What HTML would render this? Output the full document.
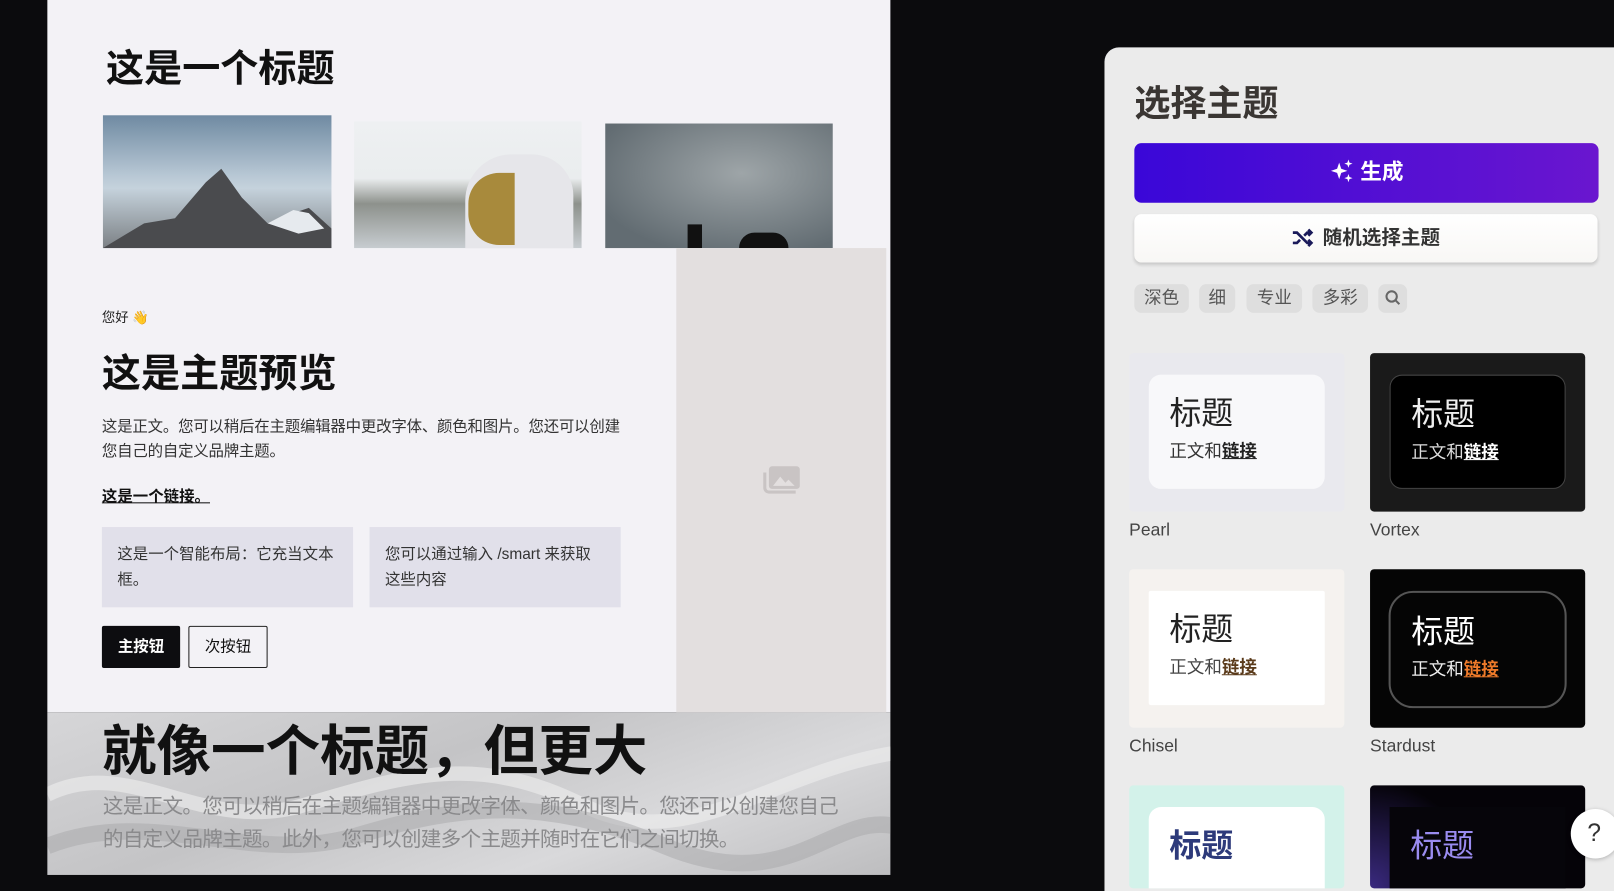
<!DOCTYPE html>
<html><head><meta charset="utf-8"><style>
*{margin:0;padding:0;box-sizing:border-box}
html,body{width:1614px;height:875px;overflow:hidden;background:#0b0b0d}
#s{position:absolute;left:0;top:0;width:1568px;height:850px;transform:scale(1.02934);transform-origin:0 0;font-family:"Liberation Sans","Noto Sans CJK SC",sans-serif}
.a{position:absolute}
.t{white-space:nowrap}
.card{position:absolute;width:209px;height:154px;border-radius:4px;overflow:hidden}
.in{position:absolute;left:19px;top:21px;width:171px;height:111px;border-radius:12px}
.h{position:absolute;left:20px;top:18px;font-size:31px;line-height:40px}
.b{position:absolute;left:20px;top:64px;font-size:17px;line-height:22px}
.b u{font-weight:bold}
.lbl{position:absolute;font-size:17px;color:#444}
.chip{position:absolute;top:276px;height:28px;background:#dedede;border-radius:7px;font-size:17px;color:#555;text-align:center;line-height:28px}
</style></head><body><div id="s">
<div class="a" style="left:46px;top:0;width:819px;height:692px;background:#f3f2f6"></div>
<div class="a t" style="left:103px;top:36px;font-size:37px;font-weight:bold;color:#111">这是一个标题</div>
<div class="a" style="left:100px;top:112px;width:222px;height:129px;background:linear-gradient(180deg,#6f8aa2 0%,#b7c7d4 45%,#c5d2dc 55%,#7c8185 100%)"></div>
<svg class="a" style="left:100px;top:112px" width="222" height="129"><polygon points="0,129 40,105 70,100 100,65 115,52 135,80 160,105 185,95 200,90 222,110 222,129" fill="#4a4b4e"/><polygon points="160,105 185,92 200,95 215,110 190,115" fill="#e6eaee"/></svg>
<div class="a" style="left:344px;top:118px;width:221px;height:123px;background:linear-gradient(180deg,#eef0f2 0%,#eaedee 45%,#8d918c 65%,#c7ccd0 100%)"></div>
<div class="a" style="left:452px;top:150px;width:105px;height:91px;background:#e6e6ea;border-radius:45px 40px 0 0"></div>
<div class="a" style="left:455px;top:168px;width:45px;height:70px;background:#a88a3c;border-radius:30px 0 0 30px"></div>
<div class="a" style="left:588px;top:120px;width:221px;height:121px;background:radial-gradient(ellipse at 60% 40%,#9ea5a8,#626c72 80%)"></div>
<div class="a" style="left:668px;top:218px;width:14px;height:23px;background:#111"></div>
<div class="a" style="left:718px;top:226px;width:48px;height:15px;background:#111;border-radius:20px 20px 0 0"></div>
<div class="a" style="left:657px;top:241px;width:204px;height:451px;background:#e3dfdf"></div>
<svg class="a" style="left:741px;top:451px" width="38" height="30"><rect x="6" y="2" width="30" height="22" rx="3" fill="#c9c4c4"/><path d="M2 8v15a4 4 0 0 0 4 4h26" stroke="#c9c4c4" stroke-width="3" fill="none"/><path d="M10 21l7-9 5 6 3-3 6 6z" fill="#e3dfdf"/></svg>
<div class="a t" style="left:99px;top:298px;font-size:13px;color:#222">您好 <span style="color:#f3b23a">👋</span></div>
<div class="a t" style="left:99px;top:332px;font-size:38px;font-weight:bold;color:#111">这是主题预览</div>
<div class="a" style="left:99px;top:403px;width:506px;font-size:15px;line-height:24px;color:#333;letter-spacing:-0.2px">这是正文。您可以稍后在主题编辑器中更改字体、颜色和图片。您还可以创建您自己的自定义品牌主题。</div>
<div class="a t" style="left:99px;top:471px;font-size:15px;font-weight:bold;color:#111;text-decoration:underline">这是一个链接。</div>
<div class="a" style="left:99px;top:512px;width:244px;height:78px;background:#e1e0ea;padding:14px 15px;font-size:15px;line-height:25px;color:#333">这是一个智能布局：它充当文本框。</div>
<div class="a" style="left:359px;top:512px;width:244px;height:78px;background:#e1e0ea;padding:14px 15px;font-size:15px;line-height:25px;color:#333">您可以通过输入 /smart 来获取这些内容</div>
<div class="a" style="left:99px;top:608px;width:76px;height:41px;background:#0d0d10;border-radius:2px;color:#fff;font-size:15px;font-weight:bold;text-align:center;line-height:41px">主按钮</div>
<div class="a" style="left:183px;top:608px;width:77px;height:41px;border:1px solid #222;border-radius:2px;color:#111;font-size:15px;text-align:center;line-height:39px">次按钮</div>
<div class="a" style="left:46px;top:692px;width:819px;height:158px;background:linear-gradient(160deg,#d6d6d8 0%,#c4c4c6 40%,#d9d9db 70%,#bdbdbf 100%);overflow:hidden">
<svg width="820" height="158"><path d="M0 80 C80 40 150 120 250 90 S420 40 520 90 700 60 820 40" stroke="#eee" stroke-width="14" fill="none" opacity=".6"/><path d="M0 130 C100 90 200 150 300 120 S480 80 600 130 760 100 820 110" stroke="#a8a8aa" stroke-width="16" fill="none" opacity=".5"/></svg></div>
<div class="a t" style="left:99px;top:688px;font-size:53px;font-weight:bold;color:#111">就像一个标题，但更大</div>
<div class="a" style="left:100px;top:768px;width:730px;font-size:20px;line-height:32px;color:#8a8a8c;letter-spacing:-0.7px">这是正文。您可以稍后在主题编辑器中更改字体、颜色和图片。您还可以创建您自己的自定义品牌主题。此外，您可以创建多个主题并随时在它们之间切换。</div>

<div class="a" style="left:1073px;top:46px;width:520px;height:820px;background:#ebebeb;border-radius:14px 0 0 0"></div>
<div class="a t" style="left:1102px;top:72px;font-size:35px;font-weight:bold;color:#3a3633">选择主题</div>
<div class="a" style="left:1102px;top:139px;width:451px;height:58px;border-radius:7px;background:linear-gradient(90deg,#3a07d8,#6a16cf);color:#fff;font-size:21px;font-weight:bold;text-align:center;line-height:58px">
<svg width="24" height="24" viewBox="0 0 24 24" style="vertical-align:-4px;margin-right:6px"><path d="M9 4l2 6 6 2-6 2-2 6-2-6-6-2 6-2z" fill="#fff"/><path d="M18 1l1 3 3 1-3 1-1 3-1-3-3-1 3-1zM18 15l1 3 3 1-3 1-1 3-1-3-3-1 3-1z" fill="#fff"/></svg>生成</div>
<div class="a" style="left:1102px;top:208px;width:450px;height:47px;border-radius:7px;background:linear-gradient(#fff,#f8f7f5);box-shadow:0 2px 3px rgba(0,0,0,.15);color:#333;font-size:19px;font-weight:bold;text-align:center;line-height:47px">
<svg width="22" height="18" viewBox="0 0 22 18" style="vertical-align:-3px;margin-right:8px"><path d="M1 4h4l10 10h4M1 14h4l3-3M12 7l3-3h4M16 1l3 3-3 3M16 11l3 3-3 3" stroke="#1a1a5a" stroke-width="2.6" fill="none"/></svg>随机选择主题</div>
<div class="chip" style="left:1102px;width:53px">深色</div>
<div class="chip" style="left:1165px;width:35px">细</div>
<div class="chip" style="left:1211px;width:54px">专业</div>
<div class="chip" style="left:1275px;width:54px">多彩</div>
<div class="chip" style="left:1339px;width:28px"><svg width="16" height="16" viewBox="0 0 16 16" style="vertical-align:-2px"><circle cx="7" cy="7" r="5" stroke="#666" stroke-width="2" fill="none"/><path d="M11 11l3.5 3.5" stroke="#666" stroke-width="2"/></svg></div>

<div class="card" style="left:1097px;top:343px;background:#e9e9ee"><div class="in" style="background:#f8f8fa"><div class="h" style="color:#222">标题</div><div class="b" style="color:#333">正文和<u style="color:#222">链接</u></div></div></div>
<div class="lbl" style="left:1097px;top:505px">Pearl</div>
<div class="card" style="left:1331px;top:343px;background:#1a1a1a"><div class="in" style="background:#000;border:1px solid #444"><div class="h" style="color:#eee">标题</div><div class="b" style="color:#ddd">正文和<u style="color:#fff">链接</u></div></div></div>
<div class="lbl" style="left:1331px;top:505px">Vortex</div>
<div class="card" style="left:1097px;top:553px;background:#f5f2ef"><div class="in" style="background:#fff;border-radius:2px"><div class="h" style="color:#222">标题</div><div class="b" style="color:#444">正文和<u style="color:#5a3a1a">链接</u></div></div></div>
<div class="lbl" style="left:1097px;top:715px">Chisel</div>
<div class="card" style="left:1331px;top:553px;background:#050505"><div class="in" style="left:18px;width:173px;height:114px;background:transparent;border:2px solid #555;border-radius:24px"><div class="h" style="color:#fff">标题</div><div class="b" style="color:#eee">正文和<u style="color:#f07b2a">链接</u></div></div></div>
<div class="lbl" style="left:1331px;top:715px">Stardust</div>
<div class="card" style="left:1097px;top:763px;height:100px;background:#d3f2ea"><div class="in" style="background:#fff"><div class="h" style="color:#2d3a7a;font-weight:bold">标题</div></div></div>
<div class="card" style="left:1331px;top:763px;height:100px;background:radial-gradient(circle at 0% 100%,#3a2a80,#050308 45%)"><div class="in" style="background:#06050a;border-radius:0"><div class="h" style="color:#9a8cf0">标题</div></div></div>
<div class="a" style="left:1526px;top:786px;width:48px;height:48px;border-radius:50%;background:#fff;box-shadow:0 1px 4px rgba(0,0,0,.25);font-size:24px;color:#333;line-height:48px;padding-left:16px">?</div>
</div></body></html>
